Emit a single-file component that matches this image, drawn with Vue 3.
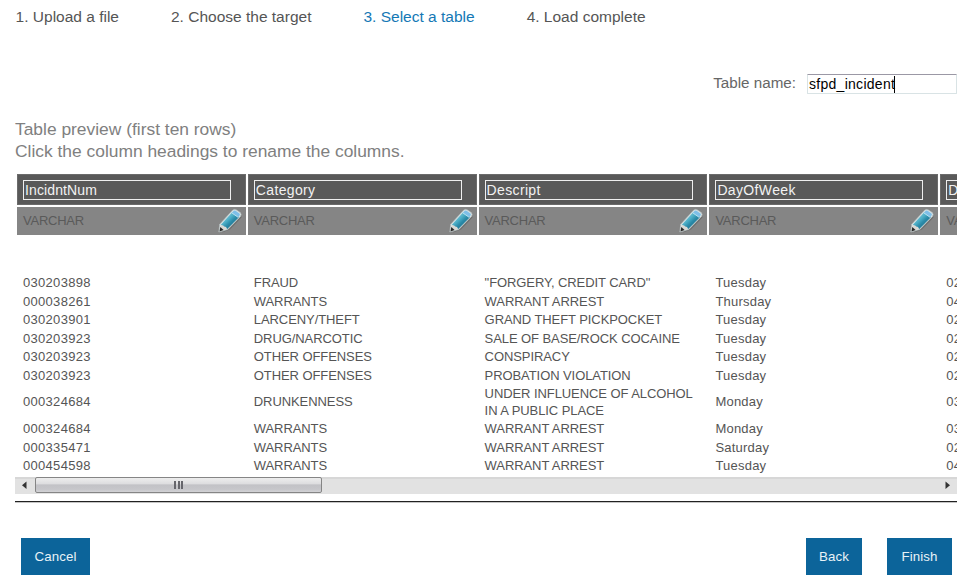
<script setup>
import { ref } from 'vue'

const steps = ['1. Upload a file', '2. Choose the target', '3. Select a table', '4. Load complete']
const activeStep = 2
const tableName = ref('sfpd_incident')
const columns = [
  { name: 'IncidntNum', type: 'VARCHAR' },
  { name: 'Category', type: 'VARCHAR' },
  { name: 'Descript', type: 'VARCHAR' },
  { name: 'DayOfWeek', type: 'VARCHAR' },
  { name: 'D', type: 'VA' },
]
const rows = [
  ['030203898', 'FRAUD', '"FORGERY, CREDIT CARD"', 'Tuesday', '02'],
  ['000038261', 'WARRANTS', 'WARRANT ARREST', 'Thursday', '04'],
  ['030203901', 'LARCENY/THEFT', 'GRAND THEFT PICKPOCKET', 'Tuesday', '02'],
  ['030203923', 'DRUG/NARCOTIC', 'SALE OF BASE/ROCK COCAINE', 'Tuesday', '02'],
  ['030203923', 'OTHER OFFENSES', 'CONSPIRACY', 'Tuesday', '02'],
  ['030203923', 'OTHER OFFENSES', 'PROBATION VIOLATION', 'Tuesday', '02'],
  ['000324684', 'DRUNKENNESS', 'UNDER INFLUENCE OF ALCOHOL IN A PUBLIC PLACE', 'Monday', '03'],
  ['000324684', 'WARRANTS', 'WARRANT ARREST', 'Monday', '03'],
  ['000335471', 'WARRANTS', 'WARRANT ARREST', 'Saturday', '02'],
  ['000454598', 'WARRANTS', 'WARRANT ARREST', 'Tuesday', '04'],
]
</script>

<template>
  <main class="page">
    <nav class="steps">
      <span v-for="(step, i) in steps" :key="step" :class="{ active: i === activeStep }">{{ step }}</span>
    </nav>

    <div class="name-row">
      <span class="name-label">Table name:</span>
      <div class="name-input">{{ tableName }}<i class="caret"></i></div>
    </div>

    <div class="intro">
      <div class="intro-title">Table preview (first ten rows)</div>
      <div>Click the column headings to rename the columns.</div>
    </div>

    <section class="viewport">
      <div class="grid">
        <div v-for="c in columns" :key="c.name" class="head-cell"><div class="head-input">{{ c.name }}</div></div>
      </div>
      <div class="grid types">
        <div v-for="c in columns" :key="c.name" class="type-cell">
          <span>{{ c.type }}</span>
          <svg class="pencil" width="26" height="26" viewBox="0 0 26 26">
            <defs>
              <linearGradient id="barrel" x1=".2" y1=".2" x2=".8" y2=".8">
                <stop offset="0" stop-color="#7cc4d8" />
                <stop offset=".35" stop-color="#4fb0c8" />
                <stop offset=".6" stop-color="#2c8dab" />
                <stop offset="1" stop-color="#1c6a86" />
              </linearGradient>
            </defs>
            <path d="M5 24.5 L13 21.5 L24.5 9.5 L24 6 L16 15 Z" fill="#4c4c4c" opacity=".4" />
            <path d="M1.8 24 L2.8 16.2 L15.4 2.4 Q17.2 .7 19.4 1.9 L23.2 4.6 Q25 6.3 23.5 8.5 L10.8 21.5 Z" fill="#d9e4e5" stroke="#b9c2c3" stroke-width=".6" stroke-linejoin="round" />
            <path d="M3.9 16.7 L15 4.4 L21.9 9.2 L10.3 20.9 Z" fill="url(#barrel)" />
            <path d="M14.8 4.7 L16.6 2.9 Q17.6 2.1 18.9 2.9 L22.4 5.4 Q23.4 6.4 22.5 7.6 L21.3 9.3 Z" fill="#7fbfe8" />
            <path d="M14.7 4.8 L21.3 9.5" stroke="#c4e6f1" stroke-width=".9" />
            <path d="M3.7 17.2 Q6.6 16.8 7 18.6 Q9.6 18.4 9.9 20.9 L2.7 23.2 Z" fill="#d9d8d4" />
            <path d="M2.5 23.5 L3.3 18.9 L6.6 22.1 Z" fill="#262626" />
          </svg>
        </div>
      </div>
      <div class="rows">
        <div v-for="(row, r) in rows" :key="r" class="grid row">
          <div v-for="(value, i) in row" :key="i" class="cell" :class="'col-' + i">{{ value }}</div>
        </div>
      </div>
    </section>

    <div class="scrollbar">
      <svg class="arrow" width="20" height="17" viewBox="0 0 20 17"><path d="M11.5 4.5 V12 L7 8.2 Z" fill="#333" /></svg>
      <div class="thumb"><i></i><i></i><i></i></div>
      <svg class="arrow right" width="20" height="17" viewBox="0 0 20 17"><path d="M8.5 4.5 V12 L13 8.2 Z" fill="#333" /></svg>
    </div>

    <footer class="actions">
      <button class="btn cancel">Cancel</button>
      <button class="btn back">Back</button>
      <button class="btn finish">Finish</button>
    </footer>
  </main>
</template>

<style>
body { background: #fff; }
</style>

<style scoped>
.page {
  box-sizing: border-box;
  width: 957px;
  height: 584px;
  padding-left: 15px;
  font-family: "Liberation Sans", Arial, sans-serif;
  color: #555;
  overflow: hidden;
}
.steps {
  display: flex;
  gap: 52px;
  height: 20px;
  padding: 7px 0 0 .6px;
  font-size: 15.5px;
  line-height: 20px;
  white-space: nowrap;
}
.active { color: #1478b5; }
.name-row {
  display: flex;
  justify-content: flex-end;
  align-items: center;
  height: 20px;
  margin-top: 47px;
}
.name-label { font-size: 15.2px; line-height: 18px; margin: -2px 11px 0 0; color: #666; }
.name-input {
  box-sizing: border-box;
  display: flex;
  align-items: center;
  width: 150px;
  height: 20px;
  padding-left: 1px;
  border: 1px solid #d9e3e5;
  border-top-color: #9b98a5;
  border-radius: 1px;
  font-size: 14px;
  letter-spacing: .28px;
  color: #000;
}
.caret { width: 1px; height: 17px; margin-left: -1px; background: #000; }
.intro {
  height: 44px;
  margin-top: 24px;
  font-size: 17.4px;
  line-height: 22px;
  color: #808080;
  white-space: nowrap;
}
.viewport {
  height: 303px;
  margin-top: 12px;
  padding-left: 2px;
  overflow: hidden;
}
.grid {
  display: grid;
  grid-template-columns: repeat(5, 228.8px);
  column-gap: 2px;
}
.head-cell {
  box-sizing: border-box;
  height: 31px;
  padding: 5px 0 0 5px;
  background: #595959;
  border: 1px solid #6b6b6b;
}
.head-input {
  box-sizing: border-box;
  width: 208px;
  height: 20px;
  padding-left: 1px;
  border: 1px solid #eee;
  font-size: 14px;
  line-height: 19px;
  letter-spacing: .35px;
  color: #f2f2f2;
}
.head-cell:first-child .head-input { letter-spacing: .12px; }
.types { margin-top: 2px; }
.type-cell {
  box-sizing: border-box;
  display: flex;
  justify-content: space-between;
  height: 28px;
  padding: 0 3px 0 6px;
  background: #858585;
  font-size: 13px;
  line-height: 28px;
  letter-spacing: -.25px;
  color: #5a5a5a;
}
.pencil { flex: none; margin-top: 1px; }
.rows { padding-top: 39px; }
.row {
  box-sizing: border-box;
  min-height: 18.5px;
  align-items: center;
  padding: 1px 0;
}
.cell {
  padding: 0 6px;
  font-size: 13px;
  line-height: 16.5px;
}
.col-0, .col-4 { letter-spacing: .3px; }
.col-1, .col-2 { letter-spacing: -.08px; }
.col-3 { letter-spacing: .22px; }
.scrollbar {
  box-sizing: border-box;
  display: flex;
  align-items: stretch;
  height: 17px;
  border-top: 2px solid #d7d7d7;
  background: #e2e2e2;
}
.arrow { flex: none; margin-top: -2px; }
.right { margin-left: auto; }
.thumb {
  box-sizing: border-box;
  display: flex;
  justify-content: center;
  align-items: center;
  gap: 1.5px;
  width: 287px;
  height: 16px;
  margin-top: -2px;
  border: 1px solid #858585;
  border-radius: 2px;
  background: linear-gradient(#ededed 0%, #dedee0 40%, #c2c2c6 50%, #c6c6ca 80%, #d2d2d5 100%);
}
.thumb i { width: 2px; height: 8px; background: #66666c; }
.actions {
  display: flex;
  margin-top: 7px;
  padding: 36px 5px 0 6px;
  border-top: 1px solid #222;
  box-shadow: inset 0 1px #c5c5c5;
}
.btn {
  box-sizing: border-box;
  height: 37px;
  padding: 0;
  border: 0;
  background: #0c649a;
  font: 13.3px "Liberation Sans", Arial, sans-serif;
  letter-spacing: .1px;
  color: #e8f2f7;
}
.cancel { width: 69px; }
.back { width: 56px; margin-left: auto; }
.finish { width: 65px; margin-left: 25px; }
</style>
